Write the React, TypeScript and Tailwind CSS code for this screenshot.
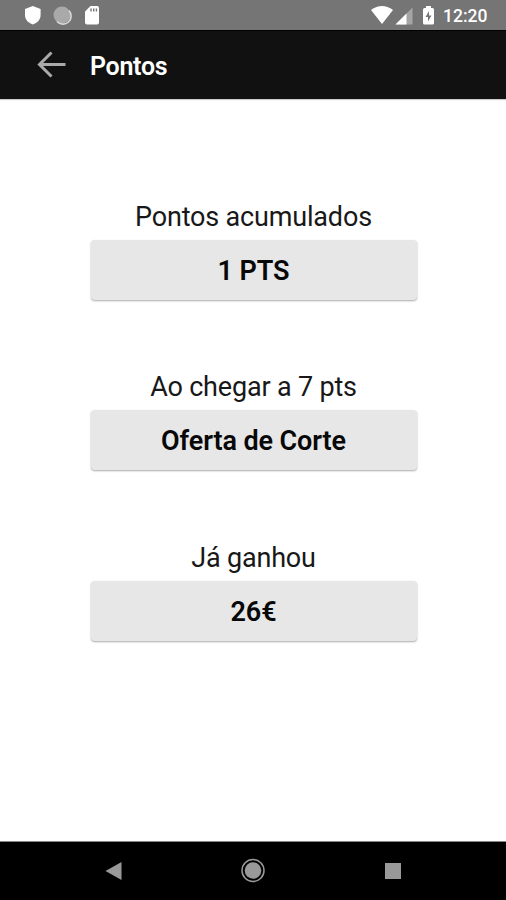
const sections = [
  { label: 'Pontos acumulados', value: '1 PTS' },
  { label: 'Ao chegar a 7 pts', value: 'Oferta de Corte' },
  { label: 'Já ganhou', value: '26€' },
]

function StatusBar() {
  return (
    <div className="flex h-[30px] shrink-0 items-center bg-[#757575] text-white">
      <svg viewBox="0 0 436 30" className="h-[30px] w-[436px]" aria-hidden="true">
        <path d="M32.800 6l7.800 3v6c0 4.500-3.300 8-7.800 9.500-4.500-1.500-7.800-5-7.800-9.500V9z" fill="#fff" />
        <circle cx="62" cy="15" r="8.500" fill="#a9a9a9" />
        <path d="M69 10.500a8 8 0 0 1-12 11" fill="none" stroke="#d8d8d8" strokeWidth="1.600" />
        <path d="M90.500 6H97q2 0 2 2v14.500q0 2-2 2H87q-2 0-2-2V11.500z" fill="#fff" />
        <path d="M91 8.500v3M93.700 8.500v3M96.400 8.500v3" stroke="#757575" strokeWidth="1.400" />
        <path d="M371 10q11-8 22 0l-11 14z" fill="#fff" />
        <path d="M412.500 7.500v17h-17z" fill="#a5a5a5" />
        <path d="M406.500 13.500v11h-11z" fill="#fff" />
        <path d="M426 6h5v2h1.500q1.500 0 1.500 1.500v13.500q0 1.500-1.500 1.500h-8q-1.500 0-1.500-1.500V9.500Q423 8 424.500 8H426z" fill="#fff" />
        <path d="M429 11l-3.500 6h2.500v4.500l3.500-6H429z" fill="#757575" />
      </svg>
      <span className="ml-[7px] pt-[4px] text-[17.5px] leading-none font-medium">12:20</span>
    </div>
  )
}

export default function App() {
  return (
    <div className="flex h-[900px] w-[506px] flex-col bg-white font-[Roboto,sans-serif] text-[#080808]">
      <StatusBar />
      <header className="flex h-[69px] shrink-0 items-center border-t border-black bg-[#111] pl-[37px] text-white shadow-[0_1px_1px_#ccc]">
        <svg width="29" height="28" viewBox="0 0 29 28" fill="none" stroke="#aaa" strokeWidth="3" aria-hidden="true">
          <path d="M28.500 13.500H3M14.500 1.500l-12 12 12 12" />
        </svg>
        <h1 className="ml-6 pt-[2px] text-[25px] leading-[33px] font-semibold tracking-[-0.3px]">Pontos</h1>
      </header>
      <main className="flex flex-1 flex-col items-center gap-[70.5px] pt-[100.5px] pl-px">
        {sections.map(({ label, value }) => (
          <section key={label} className="w-[326px] text-center">
            <h2 className="h-10 text-[27px] leading-[35px] tracking-[-0.18px] text-[#181818]">{label}</h2>
            <div className="h-[60px] rounded-sm bg-[#e7e7e7] text-[27px] leading-[63px] font-semibold tracking-[-0.1px] shadow-[0_1px_2px_#aaa]">{value}</div>
          </section>
        ))}
      </main>
      <nav className="h-[59px] shrink-0 border-t border-[#888] bg-black">
        <svg viewBox="0 0 506 58" className="h-[58px] w-full" aria-hidden="true">
          <path d="M121.500 20v18l-16-9z" fill="#999" />
          <circle cx="253" cy="28.500" r="11" fill="none" stroke="#999" strokeWidth="1.500" />
          <circle cx="253" cy="28.500" r="8.300" fill="#999" />
          <path d="M385 21h16v16h-16z" fill="#999" />
        </svg>
      </nav>
    </div>
  )
}
